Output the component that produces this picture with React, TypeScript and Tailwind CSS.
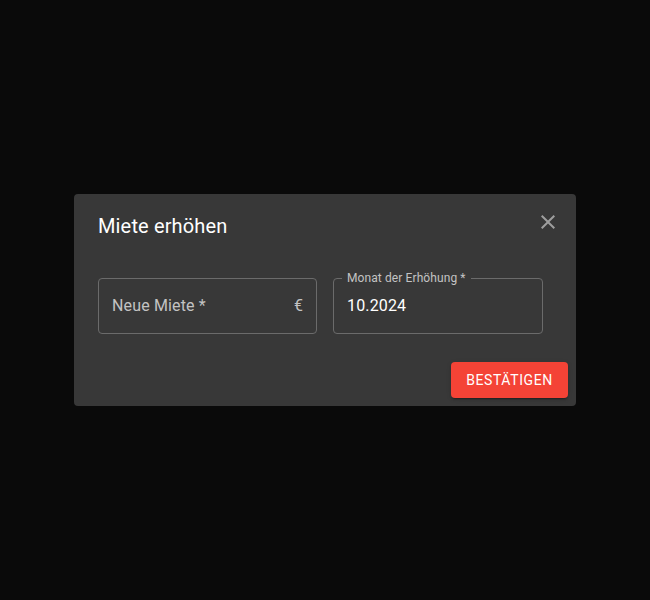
import React from "react";

export default function App() {
  return (
    <div
      className="w-[650px] h-[600px] bg-[#0a0a0a] flex items-start justify-center pt-[194px]"
      style={{ fontFamily: "Roboto, 'Liberation Sans', sans-serif" }}
    >
      <div className="w-[502px] bg-[#383838] rounded-[4px] flex flex-col">
        <div className="flex items-start justify-between pl-6 pr-4 pt-4">
          <h2 className="text-[20px] leading-[32px] font-normal tracking-[0.15px] text-white">
            Miete erhöhen
          </h2>
          <button className="w-6 h-6 flex items-center justify-center text-[#9e9e9e]">
            <svg viewBox="0 0 24 24" width="24" height="24" fill="currentColor">
              <path d="M19 6.41 17.59 5 12 10.59 6.41 5 5 6.41 10.59 12 5 17.59 6.41 19 12 13.41 17.59 19 19 17.59 13.41 12z" />
            </svg>
          </button>
        </div>
        <div className="px-6 pt-[36px] pb-5 flex gap-4">
          <div className="relative w-[219px] h-[56px] border border-[#6b6b6b] rounded-[4px] flex items-center justify-between pl-[13px] pr-[13px]">
            <span className="text-[16px] text-[#c3c3c3] tracking-[0.15px]">Neue Miete *</span>
            <span className="text-[16px] text-[#c3c3c3]">€</span>
          </div>
          <div className="relative w-[210px] h-[56px] border border-[#6b6b6b] rounded-[4px] flex items-center pl-[13px]">
            <span className="absolute left-[8px] top-[-8px] px-[5px] bg-[#383838] text-[12px] leading-[14px] text-[#c3c3c3] tracking-[0.1px]">
              Monat der Erhöhung *
            </span>
            <span className="text-[16px] text-white tracking-[0.15px]">10.2024</span>
          </div>
        </div>
        <div className="flex justify-end p-2">
          <button className="h-9 w-[117px] flex items-center justify-center bg-[#f44336] rounded-[4px] text-white text-[14px] font-normal uppercase tracking-[0.6px] shadow-[0_3px_1px_-2px_rgba(0,0,0,0.2),0_2px_2px_0_rgba(0,0,0,0.14),0_1px_5px_0_rgba(0,0,0,0.12)]">
            Bestätigen
          </button>
        </div>
      </div>
    </div>
  );
}
